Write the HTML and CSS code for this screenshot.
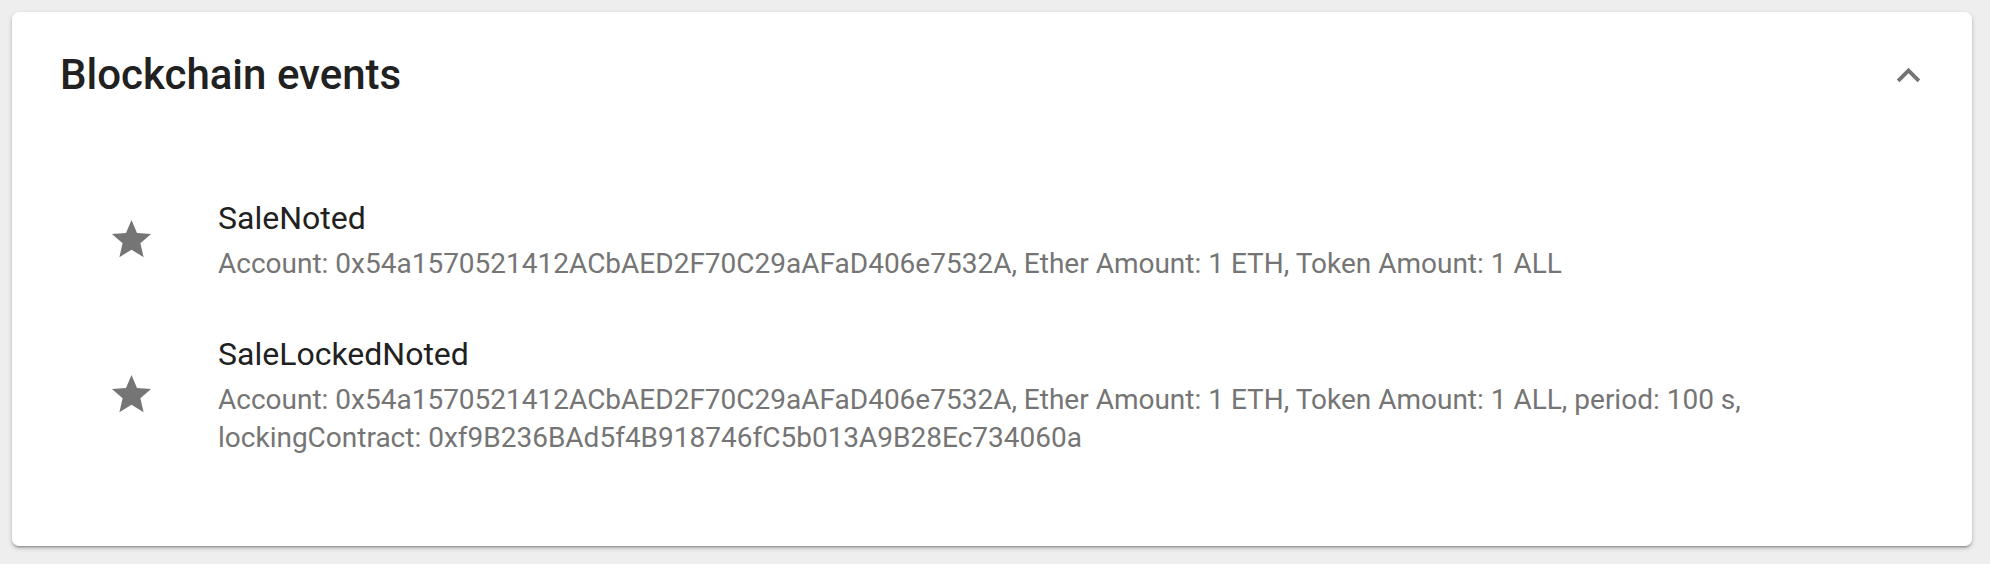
FILE: index.html
```html
<!DOCTYPE html>
<html lang="en">
<head>
<meta charset="utf-8">
<title>Blockchain events</title>
<link rel="stylesheet" href="styles.css">
</head>
<body>
<div class="card">
  <div class="card-header">
    <h2 class="card-title">Blockchain events</h2>
    <button class="collapse-btn" aria-label="Collapse">
      <svg class="chevron" viewBox="0 0 24 24"><path d="M12 8l-6 6 1.41 1.41L12 10.83l4.59 4.58L18 14z"/></svg>
    </button>
  </div>
  <ul class="event-list">
    <li class="event">
      <svg class="star" viewBox="0 0 24 24"><path d="M12 17.27L18.180 21l-1.64-7.03L22 9.24l-7.19-.61L12 2 9.19 8.63 2 9.24l5.46 4.73L5.82 21z"/></svg>
      <div class="event-text">
        <div class="event-name">SaleNoted</div>
        <div class="event-detail">Account: 0x54a1570521412ACbAED2F70C29aAFaD406e7532A, Ether Amount: 1 ETH, Token Amount: 1 ALL</div>
      </div>
    </li>
    <li class="event">
      <svg class="star" viewBox="0 0 24 24"><path d="M12 17.27L18.18 21l-1.64-7.03L22 9.24l-7.19-.61L12 2 9.19 8.63 2 9.24l5.46 4.73L5.82 21z"/></svg>
      <div class="event-text">
        <div class="event-name">SaleLockedNoted</div>
        <div class="event-detail">Account: 0x54a1570521412ACbAED2F70C29aAFaD406e7532A, Ether Amount: 1 ETH, Token Amount: 1 ALL, period: 100 s, lockingContract: 0xf9B236BAd5f4B918746fC5b013A9B28Ec734060a</div>
      </div>
    </li>
  </ul>
</div>
</body>
</html>
```
FILE: styles.css
```css
html, body {
  margin: 0;
  padding: 0;
}
body {
  background: #eeeeee;
  font-family: Roboto, "Liberation Sans", Arial, sans-serif;
  padding: 12px 0 0 12px;
  height: 564px;
  box-sizing: border-box;
  overflow: hidden;
}
.card {
  width: 1960px;
  height: 534px;
  box-sizing: border-box;
  background: #ffffff;
  border-radius: 7px;
  box-shadow: 0 2px 5px rgba(0,0,0,0.2), 0 2px 2px rgba(0,0,0,0.14), 0 3px 1px -2px rgba(0,0,0,0.12);
}
.card-header {
  display: flex;
  align-items: center;
  justify-content: space-between;
  padding: 39px 40px 0 48px;
  height: 48px;
  box-sizing: content-box;
}
.card-title {
  margin: 0;
  font-size: 42px;
  line-height: 48px;
  font-weight: 500;
  color: #212121;
}
.collapse-btn {
  border: 0;
  background: none;
  padding: 0;
  margin: 0;
  display: flex;
}
.chevron {
  width: 47px;
  height: 47px;
  fill: #757575;
}
.event-list {
  list-style: none;
  margin: 0;
  padding: 97px 48px 0 96px;
  display: flex;
  flex-direction: column;
  gap: 49px;
}
.event {
  display: flex;
  align-items: center;
}
.star {
  width: 47px;
  height: 47px;
  fill: #757575;
  margin-right: 63px;
  flex: none;
}
.event-text {
  display: flex;
  flex-direction: column;
  min-width: 0;
}
.event-name {
  font-size: 32px;
  line-height: 45px;
  color: #212121;
  margin-bottom: 4px;
}
.event-detail {
  font-size: 28px;
  line-height: 38px;
  color: #757575;
}
```
